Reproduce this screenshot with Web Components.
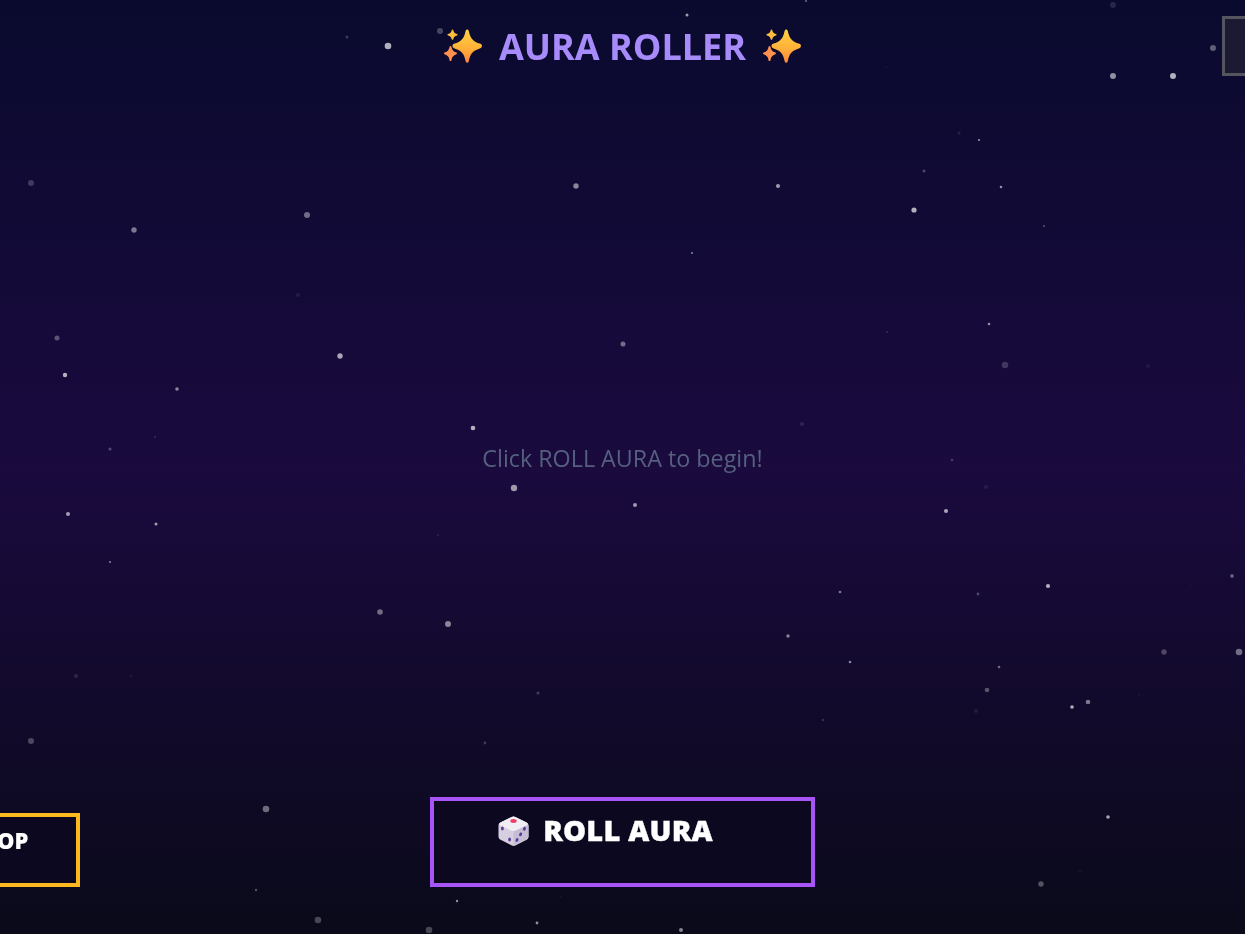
<!DOCTYPE html>
<html lang="en">
<head>
<meta charset="utf-8">
<title>Aura Roller</title>
<style>
    html, body {
        margin: 0;
        height: 100%;
        overflow: hidden;
        background: #0a0a1a;
    }
</style>
</head>
<body>
<aura-app>
    <aura-header slot="header">AURA ROLLER</aura-header>
    <aura-hint slot="hint">Click ROLL AURA to begin!</aura-hint>
    <aura-footer slot="footer"></aura-footer>
</aura-app>

<script>
// x, y, radius, opacity of every star, read off the reference
const STARS = [
    [347,37,1.5,.2],[388,46,3.3,.68],[31,183,3,.2],[307,215,3,.4],[134,230,2.7,.45],[298,295,2,.07],
    [57,338,2.5,.3],[340,356,2.7,.64],[65,375,2.2,.68],[177,389,1.8,.5],[155,437,1,.15],[110,449,1.5,.25],
    [687,15,1.5,.6],[806,1,1,.4],[440,31,3,.25],[576,186,2.7,.5],[778,186,2,.6],[692,253,1,.5],
    [623,344,2.5,.4],[473,428,2.3,.68],[802,424,2,.1],[1113,5,3,.12],[1213,48,3,.35],[1113,76,3,.55],
    [1173,76,3,.68],[886,67,1,.05],[959,133,1.5,.1],[979,140,1,.6],[924,171,1.5,.25],[1001,187,1.3,.55],
    [914,210,2.6,.68],[1044,226,1,.3],[989,324,1.3,.55],[887,332,1,.15],[1005,365,3.3,.18],[1148,366,2,.05],
    [952,460,1.3,.2],[68,514,2,.6],[156,524,1.5,.6],[110,562,1,.5],[380,612,2.8,.4],[76,676,2,.12],
    [131,676,1,.1],[31,741,3,.25],[266,809,3.3,.4],[256,890,1.2,.3],[318,920,3.3,.25],[514,488,3.2,.58],
    [635,505,2,.58],[438,535,1,.1],[448,624,3,.5],[788,636,1.7,.5],[538,693,1.6,.2],[823,720,1.3,.15],
    [485,743,1.4,.2],[725,837,1,.4],[457,901,1.2,.55],[561,897,.8,.1],[537,923,1.4,.55],[681,930,2,.5],
    [429,930,3.3,.25],[986,487,2,.07],[946,511,2,.64],[840,592,1.3,.45],[978,594,1.4,.25],[1048,586,2.1,.68],
    [1232,576,1.8,.4],[1191,586,1,.03],[850,662,1.3,.5],[999,667,1.3,.4],[1164,652,2.7,.25],[1239,652,3.3,.4],
    [987,690,2.3,.3],[1088,702,2.3,.45],[1072,707,1.8,.68],[976,711,2,.07],[1139,695,1,.05],[1108,817,1.8,.64],
    [1080,871,1.8,.04],[1041,884,2.7,.3]
];

const SPARKLE = `
    <svg width="40" height="36" viewBox="0 0 40 36" aria-hidden="true">
        <defs>
            <linearGradient id="big" x1="0" y1="0" x2="0" y2="1">
                <stop offset="0" stop-color="#ffd045"/>
                <stop offset=".55" stop-color="#ffb238"/>
                <stop offset="1" stop-color="#ff8440"/>
            </linearGradient>
        </defs>
        <path fill="url(#big)" d="M24.2 1.5 C25 1.5 25.6 2.2 25.8 3 C27.2 10.4 30 13.6 37.4 15.8 C39.4 16.4 39.4 19.6 37.4 20.2 C30 22.4 27.2 25.6 25.8 33 C25.4 35.4 23 35.4 22.6 33 C21.2 25.6 18.4 22.4 11 20.2 C9 19.6 9 16.4 11 15.8 C18.4 13.6 21.2 10.4 22.6 3 C22.8 2.2 23.4 1.5 24.2 1.5 Z"/>
        <path fill="#ffbd3f" d="M9.5 1.5 C10 1.5 10.2 1.8 10.3 2.2 C10.8 4.4 11.8 5.4 14 6 C14.8 6.2 14.8 7.2 14 7.4 C11.8 8 10.8 9 10.3 11.2 C10.1 12 8.9 12 8.7 11.2 C8.2 9 7.2 8 5 7.4 C4.2 7.2 4.2 6.2 5 6 C7.2 5.4 8.2 4.4 8.7 2.2 C8.8 1.8 9 1.5 9.5 1.5 Z"/>
        <path fill="#ff8f4c" d="M7.5 18 C8 18 8.3 18.3 8.4 18.8 C9 22 10.2 23.5 13.4 24.6 C14.2 24.9 14.2 26 13.4 26.3 C10.2 27.4 9 29 8.4 32.4 C8.2 33.3 6.8 33.3 6.6 32.4 C6 29 4.8 27.4 1.6 26.3 C.8 26 .8 24.9 1.6 24.6 C4.8 23.5 6 22 6.6 18.8 C6.7 18.3 7 18 7.5 18 Z"/>
    </svg>`;

const DIE = `
    <svg width="31" height="30" viewBox="0 0 31 30" aria-hidden="true">
        <path fill="#d6cfe0" d="M13.6 1 a4 4 0 0 1 3.8 0 L28.6 6.4 C30 7.2 30.5 8.2 30.5 9.6 V20.4 C30.5 22 29.6 23 28.4 23.8 L17.6 29.2 a4.6 4.6 0 0 1 -4.2 0 L2.6 23.8 C1.4 23 .5 22 .5 20.4 V9.6 C.5 8.2 1 7.2 2.4 6.4 Z"/>
        <path fill="#f1edf5" d="M13.6 1 a4 4 0 0 1 3.8 0 L28.6 6.4 C30.4 7.4 30.2 8.4 28.8 9.2 L17.4 14.8 a4.2 4.2 0 0 1 -3.8 0 L2.2 9.2 C.8 8.4 .6 7.4 2.4 6.4 Z"/>
        <path fill="#c6bdd4" d="M15.5 15.2 a4.2 4.2 0 0 0 1.9 -.4 L28.8 9.2 C29.8 8.7 30.5 8.6 30.5 9.8 V20.4 C30.5 22 29.6 23 28.4 23.8 L17.6 29.2 C16.9 29.6 16.2 29.7 15.5 29.7 Z"/>
        <ellipse cx="15.5" cy="5" rx="3.2" ry="1.9" fill="#ee3f63"/>
        <g fill="#5a3a9a">
            <ellipse cx="4.4" cy="12.6" rx="1.4" ry="2"/>
            <ellipse cx="11.6" cy="23.4" rx="1.4" ry="2"/>
            <ellipse cx="26.4" cy="12.8" rx="1.4" ry="2" transform="rotate(25 26.4 12.8)"/>
            <ellipse cx="22.6" cy="18.4" rx="1.4" ry="2" transform="rotate(25 22.6 18.4)"/>
            <ellipse cx="19" cy="24" rx="1.4" ry="2" transform="rotate(25 19 24)"/>
        </g>
    </svg>`;

class AuraStars extends HTMLElement {
    constructor() {
        super();
        const shadow = this.attachShadow({mode: 'open'});
        const circles = STARS.map(([x, y, r, o]) =>
            `<circle cx="${x}" cy="${y}" r="${r}" fill="#fff" opacity="${o}"/>`).join('');
        shadow.innerHTML = `
            <style>
                :host {
                    position: absolute;
                    inset: 0;
                    display: block;
                    pointer-events: none;
                }
                svg {
                    display: block;
                    width: 100%;
                    height: 100%;
                    filter: blur(.5px);
                }
            </style>
            <svg viewBox="0 0 1245 934" width="1245" height="934">${circles}</svg>
        `;
    }
}

class AuraApp extends HTMLElement {
    constructor() {
        super();
        const shadow = this.attachShadow({mode: 'open'});
        shadow.innerHTML = `
            <style>
                :host {
                    position: relative;
                    display: flex;
                    flex-direction: column;
                    height: 100vh;
                    overflow: hidden;
                    font-family: "Open Sans", "Noto Sans", sans-serif;
                    background: linear-gradient(180deg, #0a0a2e 0%, #1a0a3e 50%, #0a0a1a 100%);
                }
                .content {
                    position: relative;
                    display: flex;
                    flex-direction: column;
                    flex: 1;
                    min-height: 0;
                    filter: blur(.3px); /* the reference is slightly soft all over */
                }
                .middle {
                    flex: 1;
                    display: flex;
                    align-items: center;
                    justify-content: center;
                    padding-top: 42px;
                }
            </style>
            <aura-stars></aura-stars>
            <div class="content">
                <slot name="header"></slot>
                <div class="middle"><slot name="hint"></slot></div>
                <slot name="footer"></slot>
            </div>
        `;
    }
}

class AuraHeader extends HTMLElement {
    constructor() {
        super();
        const shadow = this.attachShadow({mode: 'open'});
        shadow.innerHTML = `
            <style>
                :host {
                    display: grid;
                    grid-template-columns: minmax(0, 1fr) auto minmax(0, 1fr);
                    align-items: start;
                    padding-top: 16px;
                }
                h1 {
                    grid-column: 2;
                    display: flex;
                    align-items: center;
                    gap: 16px;
                    height: 60px;
                    margin: 0;
                    font-size: 36px;
                    font-weight: 700;
                    color: #a78bfa;
                    white-space: nowrap;
                }
                .menu {
                    justify-self: end;
                    width: 80px;
                    height: 60px;
                    margin-right: -57px;
                    box-sizing: border-box;
                    border: 3px solid #55555f;
                    background: #1c1a33;
                }
            </style>
            <h1>${SPARKLE}<span><slot></slot></span>${SPARKLE}</h1>
            <div class="menu"></div>
        `;
    }
}

class AuraHint extends HTMLElement {
    constructor() {
        super();
        const shadow = this.attachShadow({mode: 'open'});
        shadow.innerHTML = `
            <style>
                :host {
                    display: block;
                    font-size: 23.3px;
                    font-weight: 400;
                    color: #55607f;
                }
            </style>
            <slot></slot>
        `;
    }
}

class AuraButton extends HTMLElement {
    constructor() {
        super();
        const shadow = this.attachShadow({mode: 'open'});
        shadow.innerHTML = `
            <style>
                :host {
                    display: flex;
                    justify-content: center;
                    align-items: flex-start;
                    box-sizing: border-box;
                    border: 4px solid var(--accent);
                    background: #0c0820;
                    color: #fff;
                    font-weight: 800;
                    white-space: nowrap;
                }
                .label {
                    display: flex;
                    align-items: center;
                    gap: 14px;
                }
            </style>
            <div class="label"><slot></slot></div>
        `;
    }
}

class AuraFooter extends HTMLElement {
    constructor() {
        super();
        const shadow = this.attachShadow({mode: 'open'});
        shadow.innerHTML = `
            <style>
                :host {
                    display: grid;
                    grid-template-columns: minmax(0, 1fr) 385px minmax(0, 1fr);
                    align-items: end;
                    padding-bottom: 47px;
                }
                .shop {
                    --accent: #fbb91f;
                    justify-self: end;
                    width: 200px;
                    height: 74px;
                    margin-right: 350px;
                    padding: 8px 0 0 36px;
                    font-size: 22px;
                    line-height: 30px;
                }
                .roll {
                    --accent: #a855f7;
                    height: 90px;
                    padding: 14px 34px 0 0;
                    font-size: 29px;
                    line-height: 30px;
                    letter-spacing: .2px;
                    -webkit-text-stroke: .4px #fff;
                }
                .roll span {
                    padding-bottom: 2px;
                }
            </style>
            <aura-button class="shop">SHOP</aura-button>
            <aura-button class="roll">${DIE}<span>ROLL AURA</span></aura-button>
        `;
    }
}

customElements.define('aura-stars', AuraStars);
customElements.define('aura-app', AuraApp);
customElements.define('aura-header', AuraHeader);
customElements.define('aura-hint', AuraHint);
customElements.define('aura-button', AuraButton);
customElements.define('aura-footer', AuraFooter);
</script>
</body>
</html>
